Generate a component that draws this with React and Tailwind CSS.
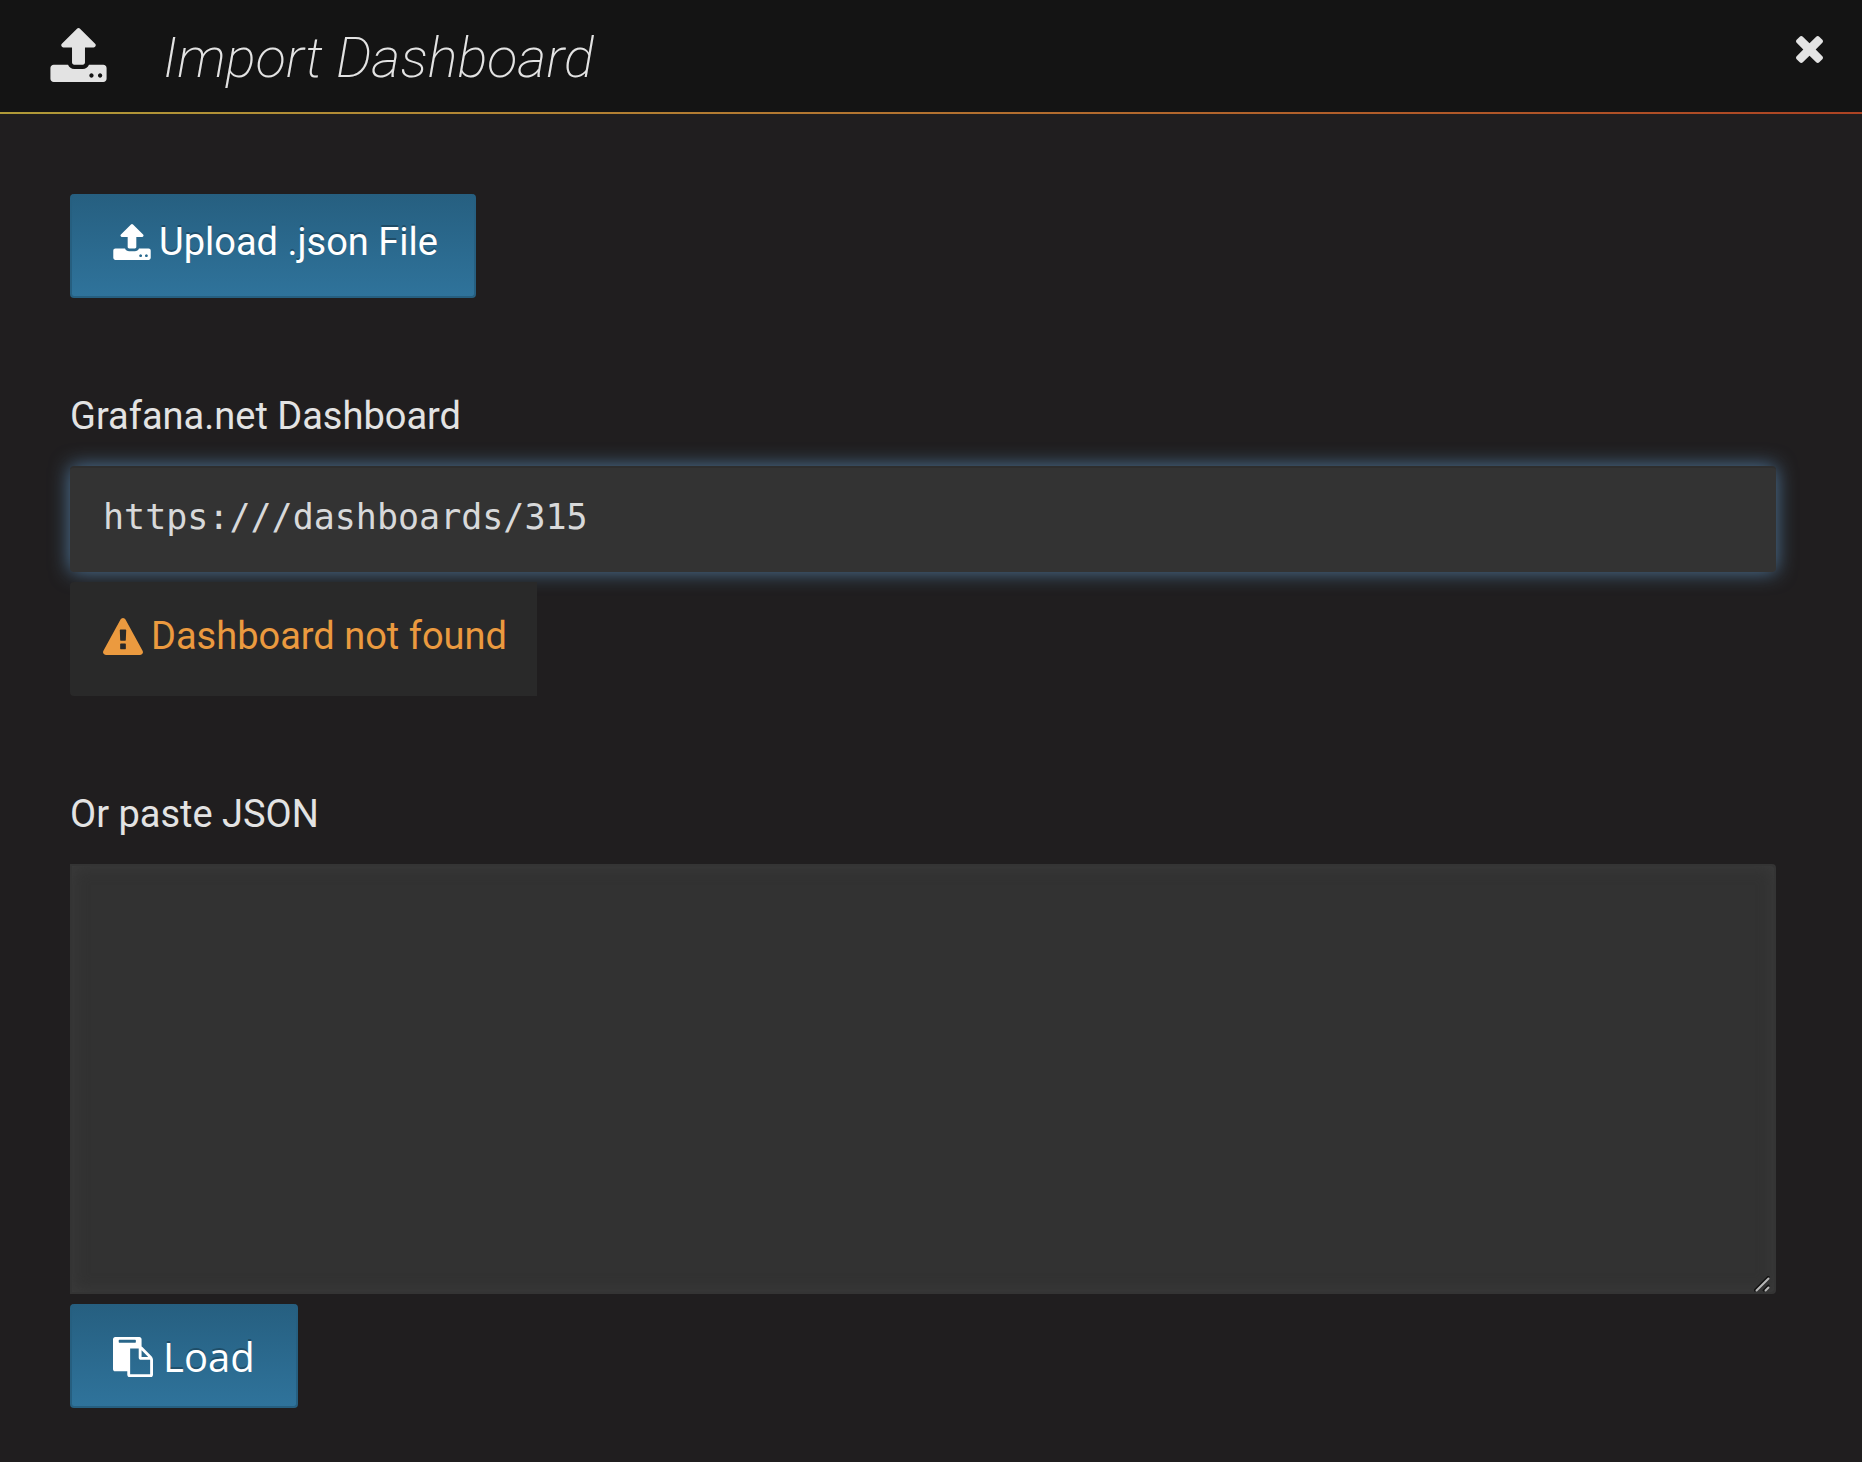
import React from "react";

function UploadIcon({ className }) {
  return (
    <svg viewBox="0 64 1664 1600" fill="currentColor" className={className} aria-hidden="true">
      <path d="M1280 1472q0-26-19-45t-45-19-45 19-19 45 19 45 45 19 45-19 19-45zm256 0q0-26-19-45t-45-19-45 19-19 45 19 45 45 19 45-19 19-45zm128-224v320q0 40-28 68t-68 28h-1472q-40 0-68-28t-28-68v-320q0-40 28-68t68-28h427q21 56 70.5 92t110.5 36h256q61 0 110.5-36t70.5-92h427q40 0 68 28t28 68zm-325-648q-17 40-59 40h-256v448q0 26-19 45t-45 19h-256q-26 0-45-19t-19-45v-448h-256q-42 0-59-40-17-39 14-69l448-448q18-19 45-19t45 19l448 448q31 30 14 69z" />
    </svg>
  );
}

function CloseIcon({ className }) {
  return (
    <svg viewBox="302 366 1188 1188" fill="currentColor" className={className} aria-hidden="true">
      <path d="M1490 1322q0 40-28 68l-136 136q-28 28-68 28t-68-28l-294-294-294 294q-28 28-68 28t-68-28l-136-136q-28-28-28-68t28-68l294-294-294-294q-28-28-28-68t28-68l136-136q28-28 68-28t68 28l294 294 294-294q28-28 68-28t68 28l136 136q28 28 28 68t-28 68l-294 294 294 294q28 28 28 68z" />
    </svg>
  );
}

function WarningIcon({ className }) {
  return (
    <svg viewBox="0 0 1792 1664" fill="currentColor" className={className} aria-hidden="true">
      <path d="M1024 1375v-190q0-14-9.5-23.5t-22.5-9.5h-192q-13 0-22.5 9.5t-9.5 23.5v190q0 14 9.5 23.5t22.5 9.5h192q13 0 22.5-9.5t9.5-23.5zm-2-374l18-459q0-12-10-19-13-11-24-11h-220q-11 0-24 11-10 7-10 21l17 457q0 10 10 16.5t24 6.5h185q14 0 23.5-6.5t10.5-16.5zm-14-934l768 1408q35 63-2 126-17 29-46.5 46t-63.5 17h-1536q-34 0-63.5-17t-46.5-46q-37-63-2-126l768-1408q17-31 47-49t65-18 65 18 47 49z" />
    </svg>
  );
}

function PasteIcon({ className }) {
  return (
    <svg viewBox="0 0 1792 1792" fill="currentColor" className={className} aria-hidden="true">
      <path d="M768 1664h896v-640h-416q-40 0-68-28t-28-68v-416h-384v1152zm256-1440v-64q0-13-9.5-22.5t-22.5-9.5h-704q-13 0-22.5 9.5t-9.5 22.5v64q0 13 9.5 22.5t22.5 9.5h704q13 0 22.5-9.5t9.5-22.5zm256 672h299l-299-299v299zm512 128v672q0 40-28 68t-68 28h-960q-40 0-68-28t-28-68v-160h-544q-40 0-68-28t-28-68v-1344q0-40 28-68t68-28h1088q40 0 68 28t28 68v328q21 13 36 28l408 408q28 28 48 76t20 88z" />
    </svg>
  );
}

function ResizeGrip({ className }) {
  return (
    <svg viewBox="0 0 16 16" fill="none" className={className} aria-hidden="true">
      <path d="M0 15L15 0M9 15L15 9" stroke="#111" strokeWidth="2" />
      <path d="M2 15L15 2M11 15L15 11" stroke="#b8b8b8" strokeWidth="2" />
    </svg>
  );
}

const buttonClass =
  "flex h-[104px] items-center rounded border-2 border-t-0 border-[#265f80] bg-linear-to-b from-[#265f80] to-[#2f739b] pl-[41px] text-white text-shadow-[0_-2px_0_rgb(0_0_0/0.25)]";

export default function App() {
  return (
    <div className="min-h-screen bg-[#201e1f] font-['Roboto',sans-serif] text-[38px] leading-[44px] text-[#e3e3e3]">
      <header className="flex h-28 items-start bg-[#141414] pr-[39px] pl-[50px]">
        <UploadIcon className="mt-7 h-[54px] w-[57px]" />
        <h1 className="mt-[25px] ml-14 text-[56px] leading-[66px] font-extralight italic">Import Dashboard</h1>
        <button type="button" aria-label="Close" className="mt-9 ml-auto">
          <CloseIcon className="size-[27px]" />
        </button>
      </header>
      <div className="h-0.5 bg-linear-to-r from-[#b09a38] via-[#b37230] to-[#ad4323]" />

      <main className="flex flex-col items-start pt-20 pr-[86px] pb-12 pl-[70px]">
        <button type="button" className={buttonClass + " pr-9 pb-1.5"}>
          <UploadIcon className="mr-2 h-9 w-[38px]" />
          Upload .json File
        </button>

        <label htmlFor="dashboard-url" className="mt-24">
          Grafana.net Dashboard
        </label>
        <input
          id="dashboard-url"
          type="text"
          defaultValue="https:///dashboards/315"
          className="mt-7 h-[106px] w-full rounded border-t-2 border-[#2e2e2e] bg-[#333] px-[33px] pb-1.5 font-['DejaVu_Sans_Mono',monospace] text-[35px] text-[#d8d9da] shadow-[0_0_20px_#50799e] outline-none"
        />
        <div role="alert" className="relative mt-2.5 flex h-[114px] items-center rounded-l bg-[#292929] pr-[30px] pb-1.5 pl-[33px] text-[#eb9a3f]">
          <WarningIcon className="mr-2 h-[37px] w-10" />
          Dashboard not found
        </div>

        <label htmlFor="dashboard-json" className="mt-24">
          Or paste JSON
        </label>
        <div className="relative mt-7 w-full">
          <textarea
            id="dashboard-json"
            className="block h-[430px] w-full resize-none rounded-r border-2 border-[#343434] bg-[#323232] p-8 shadow-[inset_0_0_16px_#3c3c3c] outline-none"
          />
          <ResizeGrip className="absolute right-1.5 bottom-0.5 size-4" />
        </div>
        <button type="button" className={buttonClass + " mt-2.5 pt-1 pr-[41px] font-['Open_Sans',sans-serif] text-[40px]"}>
          <PasteIcon className="mr-2.5 size-10" />
          Load
        </button>
      </main>
    </div>
  );
}
